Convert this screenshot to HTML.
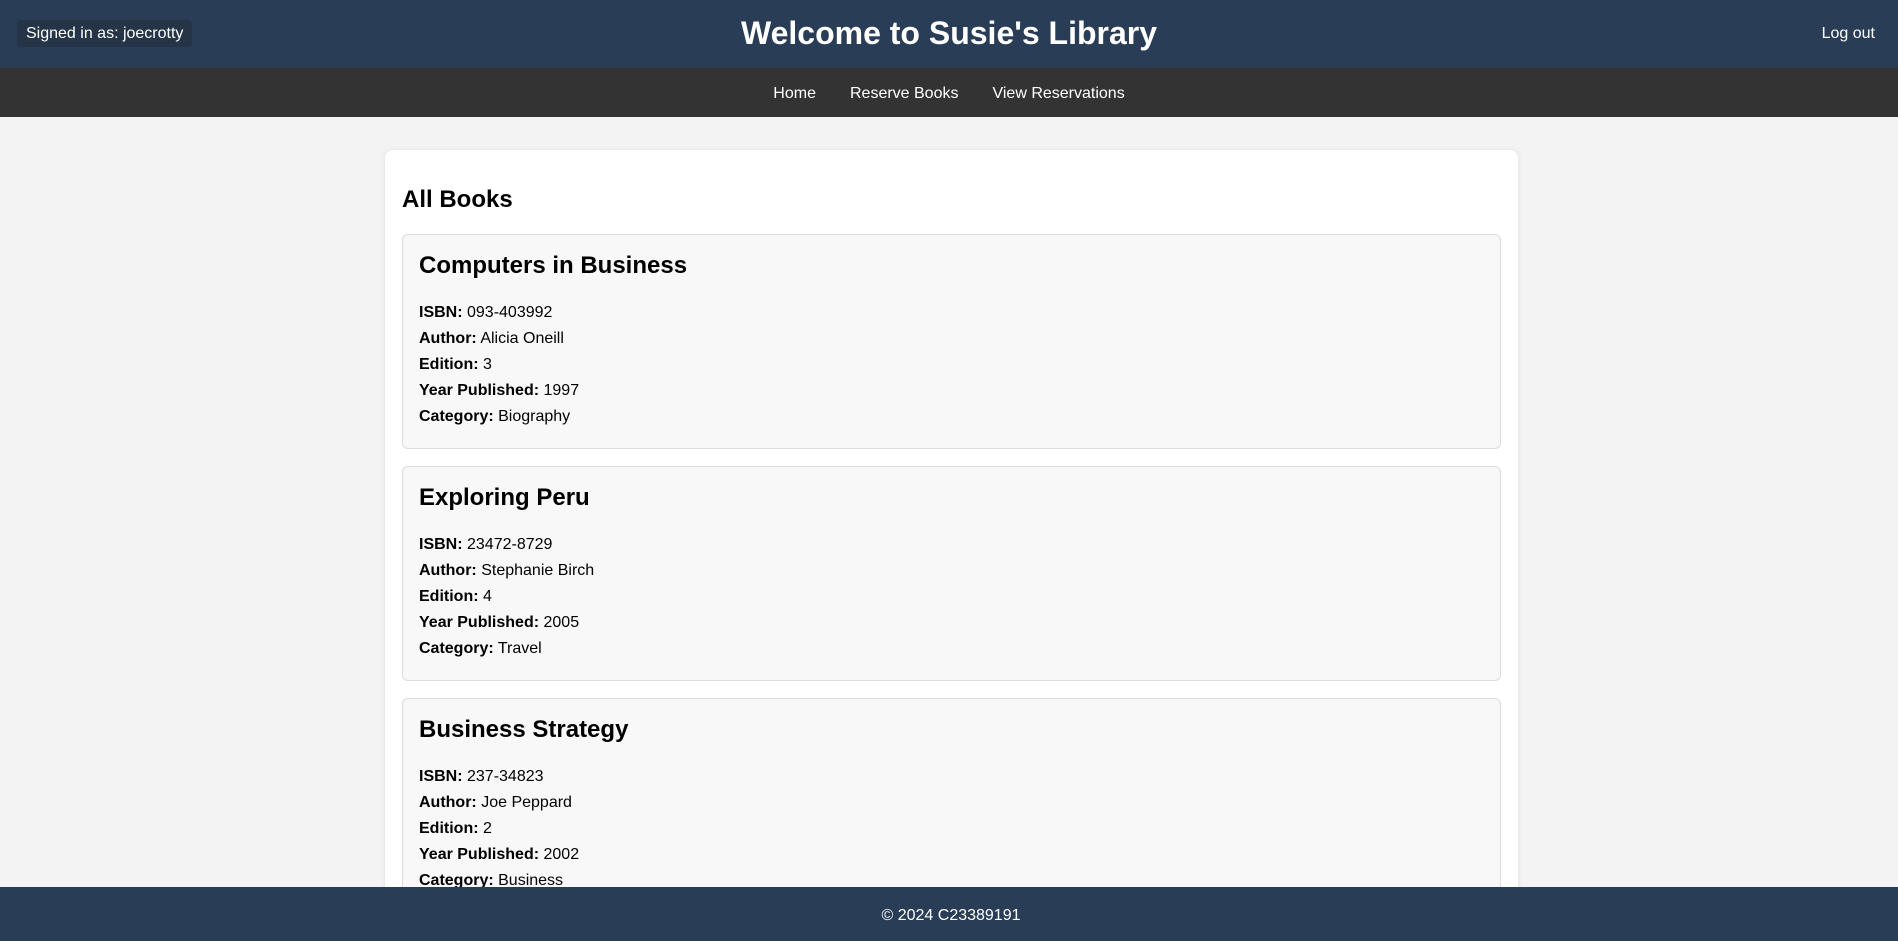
<!DOCTYPE html>
<html><head><meta charset="utf-8"><style>
*{box-sizing:border-box;margin:0;padding:0}
html,body{width:1898px;height:941px;overflow:hidden}
body{background:#f3f3f3;font-family:"Liberation Sans",Arial,sans-serif;color:#000;position:relative}
header{height:68px;background:#2a3d57;position:relative;color:#fff}
header h1{position:absolute;left:0;right:0;top:13px;text-align:center;font-size:32px;line-height:40px;font-weight:bold}
.badge{position:absolute;left:17px;top:20px;height:27px;padding:0 9px;background:#253447;border-radius:4px;font-size:16px;line-height:27px}
.logout{position:absolute;right:23px;top:24px;font-size:16px;line-height:20px}
nav{height:49px;background:#333;text-align:center;color:#fff;font-size:16px;line-height:51px}
nav span{margin:0 17px}
.main{position:absolute;left:385px;top:150px;width:1133px;height:800px;background:#fff;border-radius:8px;box-shadow:0 0 6px rgba(0,0,0,.08);padding:36px 17px 0}
.main h2{font-size:24px;line-height:28px;margin-bottom:20px}
.book{background:#f8f8f8;border:1px solid #ddd;border-radius:6px;height:215px;padding:17px 16px 0;margin-bottom:17px}
.book h3{font-size:24px;line-height:28px;margin-bottom:20px}
.book p{font-size:16px;line-height:26px}
footer{position:absolute;left:0;top:887px;width:1898px;height:54px;background:#2a3d57;color:#fff;text-align:center;font-size:16px;line-height:57px;padding-left:4px}
</style></head><body>
<header><div class="badge">Signed in as: joecrotty</div><h1>Welcome to Susie's Library</h1><div class="logout">Log out</div></header>
<nav><span>Home</span><span>Reserve Books</span><span>View Reservations</span></nav>
<div class="main">
<h2>All Books</h2>
<div class="book"><h3>Computers in Business</h3>
<p><b>ISBN:</b> 093-403992</p><p><b>Author:</b> Alicia Oneill</p><p><b>Edition:</b> 3</p><p><b>Year Published:</b> 1997</p><p><b>Category:</b> Biography</p></div>
<div class="book"><h3>Exploring Peru</h3>
<p><b>ISBN:</b> 23472-8729</p><p><b>Author:</b> Stephanie Birch</p><p><b>Edition:</b> 4</p><p><b>Year Published:</b> 2005</p><p><b>Category:</b> Travel</p></div>
<div class="book"><h3>Business Strategy</h3>
<p><b>ISBN:</b> 237-34823</p><p><b>Author:</b> Joe Peppard</p><p><b>Edition:</b> 2</p><p><b>Year Published:</b> 2002</p><p><b>Category:</b> Business</p></div>
</div>
<footer>© 2024 C23389191</footer>
</body></html>
